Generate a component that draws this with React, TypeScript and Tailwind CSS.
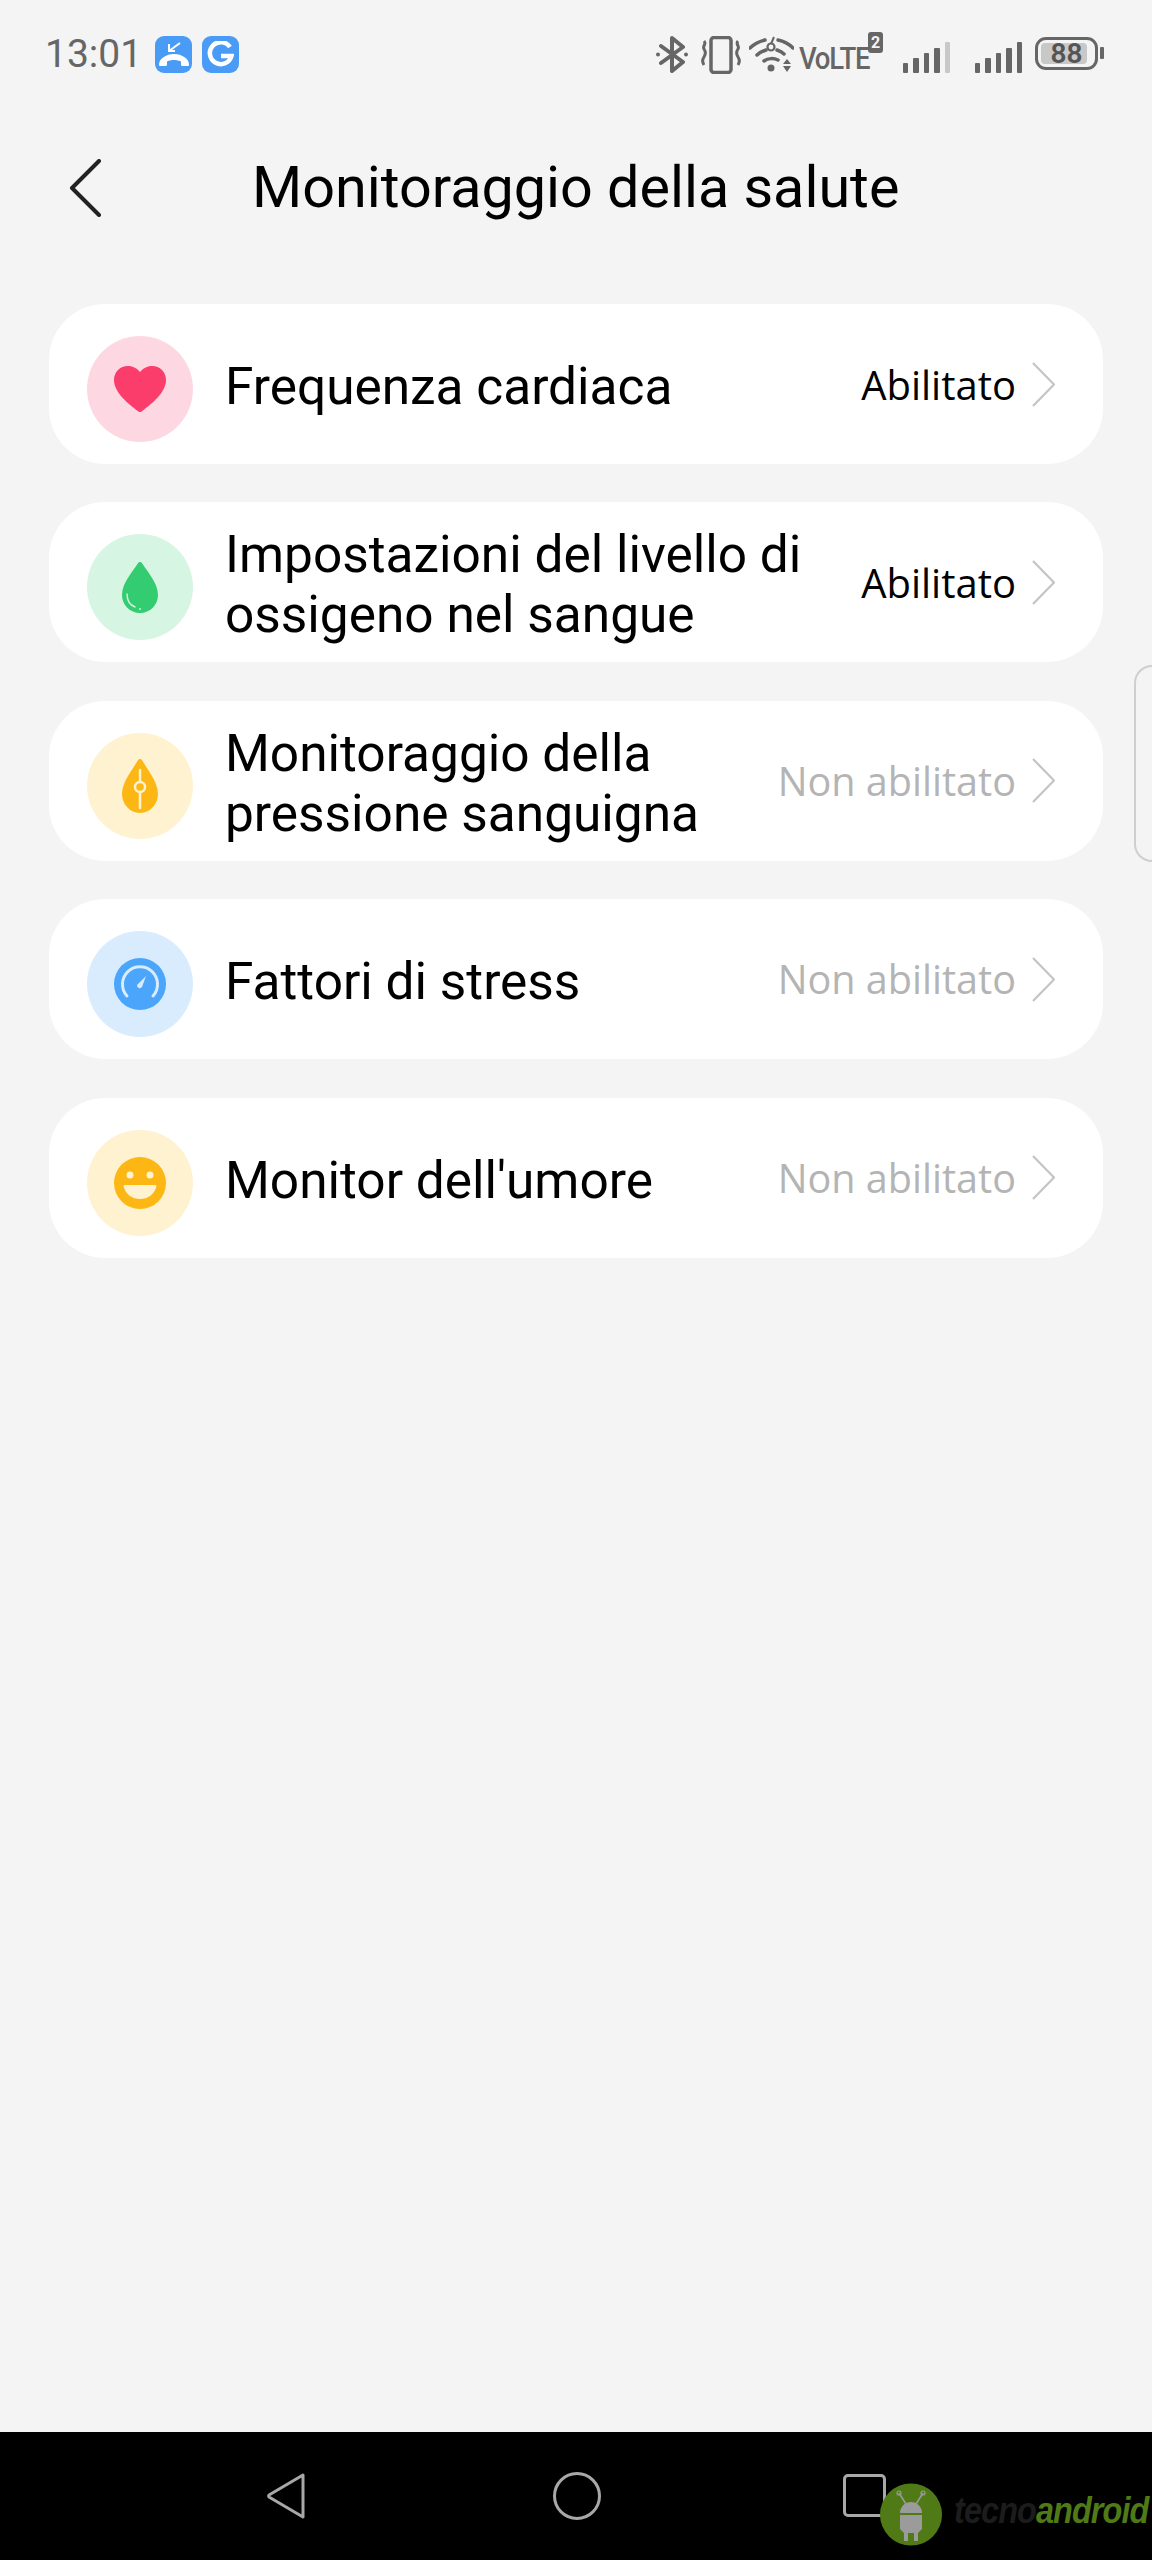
const rows = [
  { label: "Frequenza cardiaca", status: "Abilitato", on: true, circle: "bg-[#fdd8e2]", icon: <HeartIcon /> },
  { label: "Impostazioni del livello di ossigeno nel sangue", status: "Abilitato", on: true, circle: "bg-[#d6f5e3]", icon: <DropIcon /> },
  { label: "Monitoraggio della pressione sanguigna", status: "Non abilitato", on: false, circle: "bg-[#fef2d0]", icon: <PressureIcon /> },
  { label: "Fattori di stress", status: "Non abilitato", on: false, circle: "bg-[#d8ecfe]", icon: <GaugeIcon /> },
  { label: "Monitor dell'umore", status: "Non abilitato", on: false, circle: "bg-[#fef2d0]", icon: <SmileIcon /> },
];

function HeartIcon() {
  return (
    <svg width="52" height="46" viewBox="0 0 52 46">
      <path d="M26 46c-1.200 0-2-.6-3-1.500C15 38 0 27 0 14 0 6 6 0 14 0c5 0 9 2.500 12 6 3-3.500 7-6 12-6 8 0 14 6 14 14 0 13-15 24-23 30.500-1 .9-1.800 1.500-3 1.500z" fill="#fb3d6b" />
    </svg>
  );
}

function DropIcon() {
  return (
    <svg width="36" height="51" viewBox="0 0 36 51">
      <path d="M18 0c1 0 1.700.6 2.400 1.700C25 9 36 21 36 33c0 10-8 18-18 18S0 43 0 33C0 21 11 9 15.600 1.700 16.300.6 17 0 18 0z" fill="#34cc71" />
      <path d="M5 32c0 6 3 11 8 13" fill="none" stroke="#c9f3da" strokeWidth="1.500" strokeLinecap="round" />
      <circle cx="18" cy="47" r="1" fill="#c9f3da" />
    </svg>
  );
}

function PressureIcon() {
  return (
    <svg width="36" height="54" viewBox="0 0 36 54">
      <path d="M18 0c1 0 1.700.6 2.400 1.700C25 10 36 23 36 35c0 10-8 19-18 19S0 45 0 35C0 23 11 10 15.600 1.700 16.300.6 17 0 18 0z" fill="#fdb714" />
      <path d="M18 11v11M18 34v15" stroke="#fef2d0" strokeWidth="2.500" strokeLinecap="round" />
      <circle cx="18" cy="28" r="5" fill="none" stroke="#fef2d0" strokeWidth="2.500" />
    </svg>
  );
}

function GaugeIcon() {
  return (
    <svg width="52" height="52" viewBox="0 0 52 52">
      <circle cx="26" cy="26" r="26" fill="#4aa5fb" />
      <path d="M13 38a17.500 17.500 0 1 1 26 0" fill="none" stroke="#d8ecfe" strokeWidth="3" strokeLinecap="round" />
      <path d="M32 18l-4 11a2.800 2.800 0 0 1-5-2z" fill="#d8ecfe" />
    </svg>
  );
}

function SmileIcon() {
  return (
    <svg width="52" height="52" viewBox="0 0 52 52">
      <circle cx="26" cy="26" r="26" fill="#fdb714" />
      <circle cx="16" cy="18" r="3.500" fill="#fef2d0" />
      <circle cx="36" cy="18" r="3.500" fill="#fef2d0" />
      <path d="M11 28h30c1 0 1.500.7 1.300 1.700C40.500 37 34 42 26 42S11.500 37 9.700 29.700C9.500 28.700 10 28 11 28z" fill="#fef2d0" />
    </svg>
  );
}

function Chevron() {
  return (
    <svg width="23" height="45" viewBox="0 0 23 45" className="shrink-0">
      <path d="M1 1l21 21.500L1 44" fill="none" stroke="#c4c4c4" strokeWidth="2.200" />
    </svg>
  );
}

function Signal({ last }: { last: string }) {
  return (
    <div className="flex items-end gap-[5px] h-[31px] mt-[6px] w-[47px]">
      <div className="w-[6px] h-[10px] rounded-[1px] bg-[#666]" />
      <div className="w-[6px] h-[15px] rounded-[1px] bg-[#666]" />
      <div className="w-[6px] h-[20px] rounded-[1px] bg-[#666]" />
      <div className="w-[6px] h-[25px] rounded-[1px] bg-[#666]" />
      <div className={`w-[6px] h-[31px] rounded-[1px] ${last}`} />
    </div>
  );
}

function StatusBar() {
  return (
    <div className="h-[110px] pl-[45px] pr-[48px] pt-[36px] flex items-start text-[#666]">
      <span className="text-[39px] leading-[37px] font-['Roboto',sans-serif] w-[110px]">13:01</span>
      <div className="flex gap-[10px]">
        <div className="w-[37px] h-[37px] rounded-[9px] bg-[#4a9bf6] flex items-center justify-center">
          <svg width="32" height="28" viewBox="0 0 32 28">
            <path d="M1 24c0-4 2-6 4-7.500C8.500 14 12 13 16 13s7.500 1 11 3.500c2 1.500 4 3.500 4 7.500 0 .8-.6 1-1.200 1h-5.600c-.8 0-1.200-.5-1.200-1.200v-3.300c-2-1-4.500-1.500-7-1.500s-5 .5-7 1.500v3.300c0 .7-.4 1.200-1.200 1.200H2.200C1.600 25 1 24.800 1 24z" fill="#fff" />
            <path d="M11 3v7h6M11 10l11-8" fill="none" stroke="#fff" strokeWidth="2" />
          </svg>
        </div>
        <div className="w-[37px] h-[37px] rounded-[9px] bg-[#4a9bf6] flex items-center justify-center">
          <svg width="27" height="27" viewBox="0 0 27 27">
            <path d="M23 6a11 11 0 1 0 1.500 9H14" fill="none" stroke="#fff" strokeWidth="4.500" />
          </svg>
        </div>
      </div>
      <div className="ml-auto flex items-start">
        <svg width="32" height="37" viewBox="0 0 32 37" className="mr-[13px]">
          <path d="M5 10l22 16-11 9V2l11 9L5 27" fill="none" stroke="#666" strokeWidth="4" strokeLinejoin="round" strokeLinecap="round" />
          <circle cx="2" cy="18.500" r="2" fill="#666" />
          <circle cx="30" cy="18.500" r="2" fill="#666" />
        </svg>
        <svg width="40" height="38" viewBox="0 0 40 38" className="mr-[8px]">
          <rect x="10" y="1.500" width="20" height="35" rx="3" fill="none" stroke="#666" strokeWidth="3.500" />
          <path d="M3 5c3 3-2 5 0 8s2 5 0 8-2 5 0 8M37 5c-3 3 2 5 0 8s-2 5 0 8 2 5 0 8" fill="none" stroke="#666" strokeWidth="3" />
        </svg>
        <svg width="45" height="38" viewBox="0 0 45 38" className="mr-[5px]">
          <path d="M1 12c5-5 11-7 15-8M29 4c5 1 10 3 15 8M8 19c3-3 6-4 9-5M28 14c3 1 5 2 7 4M15 25c4-3 10-3 14-1" fill="none" stroke="#666" strokeWidth="3.500" strokeLinecap="round" />
          <circle cx="22" cy="11" r="3.500" fill="none" stroke="#666" strokeWidth="2.200" />
          <path d="M22 8l3-7" stroke="#666" strokeWidth="2" />
          <circle cx="22" cy="32" r="3.500" fill="#666" />
          <path d="M34 28h8l-4-5zM34 30h8l-4 6z" fill="#666" />
        </svg>
        <div className="w-[69px] h-[38px] mt-[3px]">
          <span className="block origin-left scale-x-[0.86] text-[32px] leading-[38px] font-medium tracking-[-1.500px] whitespace-nowrap font-['Roboto',sans-serif]">VoLTE</span>
        </div>
        <div className="w-[15px] h-[21px] rounded-[3px] bg-[#666] text-[#f4f4f4] text-[16px] leading-[21px] font-bold text-center mt-[-4px] mr-[20px] font-['Roboto',sans-serif]">2</div>
        <Signal last="bg-[#c8c8c8]" />
        <div className="w-[25px]" />
        <Signal last="bg-[#666]" />
        <div className="w-[13px]" />
        <div className="relative w-[63px] h-[33px] border-[3px] border-[#666] rounded-[11px] p-[3px] mt-[1px]">
          <div className="w-[46px] h-full rounded-[4px] bg-[#c8c8c8]" />
          <span className="absolute inset-0 text-center text-[28px] leading-[27px] font-semibold text-[#555] font-['Roboto',sans-serif]">88</span>
        </div>
        <div className="w-[4px] h-[12px] rounded-[1px] bg-[#666] ml-[2px] mt-[11px]" />
      </div>
    </div>
  );
}

function NavBar() {
  return (
    <div className="relative h-[128px] bg-black flex items-start pt-[40px] pl-[266px]">
      <svg width="40" height="48" viewBox="0 0 40 48">
        <path d="M37 3L3 23a1.500 1.500 0 0 0 0 2l34 20z" fill="none" stroke="#a8a8a8" strokeWidth="3" strokeLinejoin="round" />
      </svg>
      <div className="w-[48px] h-[48px] ml-[247px] rounded-full border-[3px] border-[#a8a8a8]" />
      <div className="w-[43px] h-[43px] ml-[242px] mt-[2px] rounded-[5px] border-[3px] border-[#a8a8a8]" />
      <div className="absolute left-[880px] top-[51px] flex items-center">
        <svg width="62" height="63" viewBox="0 0 62 63">
          <circle cx="31" cy="31.500" r="31" fill="#4f7a16" />
          <path d="M19 10l7 11M43 10l-7 11" stroke="#9b9b9b" strokeWidth="1.500" />
          <circle cx="19" cy="10" r="2" fill="none" stroke="#9b9b9b" strokeWidth="1.200" />
          <circle cx="43" cy="10" r="2" fill="none" stroke="#9b9b9b" strokeWidth="1.200" />
          <path d="M20 30a11 11 0 0 1 22 0z" fill="#9b9b9b" />
          <path d="M20 32h22v14l-4 4v8h-4v-8h-6v8h-4v-8l-4-4z" fill="#9b9b9b" />
        </svg>
        <span className="ml-[12px] w-[198px] origin-left scale-x-[0.9] text-[36px] leading-[40px] mt-[-8px] font-bold italic tracking-[-1px] font-['Liberation_Sans',sans-serif] whitespace-nowrap">
          <span className="text-[#1c1c1c]">tecno</span>
          <span className="text-[#4f7a16]">android</span>
        </span>
      </div>
    </div>
  );
}

export default function App() {
  return (
    <div className="relative w-[1152px] h-[2560px] overflow-hidden bg-[#f4f4f4] flex flex-col font-['Roboto',sans-serif]">
      <StatusBar />
      <div className="flex items-center h-[156px] pl-[69px]">
        <svg width="32" height="58" viewBox="0 0 32 58">
          <path d="M30 2L3 29l27 27" fill="none" stroke="#222" strokeWidth="4" strokeLinecap="round" strokeLinejoin="round" />
        </svg>
        <h1 className="ml-[151px] text-[57.5px] font-normal text-black">Monitoraggio della salute</h1>
      </div>
      <div className="flex-1 px-[49px] pt-[38px] flex flex-col gap-[38.4px]">
        {rows.map((row) => (
          <div key={row.label} className="h-[160px] rounded-[56px] bg-white flex items-center pl-[38px] pr-[48px]">
            <div className={`w-[106px] h-[106px] mt-[10px] shrink-0 rounded-full flex items-center justify-center ${row.circle}`}>
              {row.icon}
            </div>
            <div className="flex-1 ml-[32px] mt-[6px] text-[51.4px] leading-[60px] text-black">{row.label}</div>
            <span className={`ml-[8px] mr-[16px] mt-[2px] whitespace-nowrap font-['Open_Sans',sans-serif] ${row.on ? "text-[40px] text-black" : "text-[39.6px] text-[#b4b4b4]"}`}>
              {row.status}
            </span>
            <Chevron />
          </div>
        ))}
      </div>
      <div className="absolute right-0 top-[665px] w-[18px] h-[197px] border-[2px] border-r-0 border-[#cfcfcf] rounded-l-[18px]" />
      <NavBar />
    </div>
  );
}
